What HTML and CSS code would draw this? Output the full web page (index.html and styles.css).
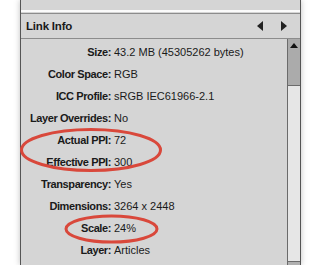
FILE: index.html
```html
<!DOCTYPE html>
<html lang="en-US">
<head>
    <meta charset="utf-8"/>
    <title>Link Info</title>
    <link rel="stylesheet" href="styles.css">
</head>
<body>
    <div class="panel">
        <div class="top-strip"></div>
        <div class="header">
            <span class="title">Link Info</span>
            <span class="nav">
                <svg width="6" height="10" viewBox="0 0 6 10"><polygon points="6,0 6,10 0,5" fill="#222"/></svg>
                <svg width="6" height="10" viewBox="0 0 6 10"><polygon points="0,0 0,10 6,5" fill="#222"/></svg>
            </span>
        </div>
        <div class="content">
            <div class="rows">
                <div class="row"><span class="label">Size:</span><span class="value">43.2 MB (45305262 bytes)</span></div>
                <div class="row"><span class="label">Color Space:</span><span class="value">RGB</span></div>
                <div class="row"><span class="label">ICC Profile:</span><span class="value">sRGB IEC61966-2.1</span></div>
                <div class="row"><span class="label">Layer Overrides:</span><span class="value">No</span></div>
                <div class="row"><span class="label">Actual PPI:</span><span class="value">72</span></div>
                <div class="row"><span class="label">Effective PPI:</span><span class="value">300</span></div>
                <div class="row"><span class="label">Transparency:</span><span class="value">Yes</span></div>
                <div class="row"><span class="label">Dimensions:</span><span class="value">3264 x 2448</span></div>
                <div class="row"><span class="label">Scale:</span><span class="value">24%</span></div>
                <div class="row"><span class="label">Layer:</span><span class="value">Articles</span></div>
            </div>
            <div class="scrollbar">
                <div class="thumb">
                    <svg width="8" height="5" viewBox="0 0 8 5"><polygon points="0,5 8,5 4,0" fill="#111"/></svg>
                </div>
                <div class="track"></div>
                <div class="down"></div>
            </div>
        </div>
    </div>

    <svg class="marks" width="316" height="265" viewBox="0 0 316 265">
        <ellipse cx="91" cy="150" rx="69.5" ry="20.5" fill="none" stroke="#d9483b" stroke-width="3"/>
        <ellipse cx="111.5" cy="229" rx="45.5" ry="13" fill="none" stroke="#d9483b" stroke-width="3"/>
    </svg>
</body>
</html>
```

FILE: styles.css
```css
body {
    margin: 0;
    width: 316px;
    height: 265px;
    overflow: hidden;
    background: #fff;
    font-family: 'Liberation Sans', Arial, sans-serif;
    font-size: 11px;
    color: #1a1a1a;
}

.panel {
    margin-left: 20px;
    width: 279px;
    height: 265px;
    background-color: #d5d5d5;
    border-left: 1px solid #555;
    border-right: 1px solid #555;
    box-shadow: 0 0 6px rgba(0, 0, 0, 0.25);
    display: flex;
    flex-direction: column;
}

.top-strip {
    height: 10px;
    border-bottom: 2px solid #fbfbfb;
    box-shadow: 0 1px 0 #d5d5d5, 0 2px 0 #8c8c8c;
    margin-bottom: 2px;
}

.header {
    height: 24px;
    border-bottom: 1px solid #8c8c8c;
    display: flex;
    align-items: center;
    justify-content: space-between;
    padding: 0 13px 0 5px;
}

.title {
    font-weight: bold;
    font-size: 11.5px;
    letter-spacing: -0.2px;
}

.nav {
    display: flex;
    gap: 18px;
    align-items: center;
}

.nav svg {
    display: block;
}

.content {
    flex: 1;
    display: flex;
    min-height: 0;
}

.rows {
    flex: 1;
    padding-top: 2px;
}

.row {
    height: 22px;
    display: grid;
    grid-template-columns: 90px 1fr;
    column-gap: 3px;
    align-items: center;
    white-space: nowrap;
}

.label {
    font-weight: bold;
    text-align: right;
    letter-spacing: -0.4px;
}

.scrollbar {
    width: 12px;
    border-left: 1px solid #6b6b6b;
    display: flex;
    flex-direction: column;
}

.thumb {
    height: 47px;
    background-color: #ababab;
    border-bottom: 1px solid #6b6b6b;
    display: flex;
    justify-content: center;
    padding-top: 4px;
    box-sizing: border-box;
}

.thumb svg {
    display: block;
}

.track {
    flex: 1;
    background-color: #e6e6e6;
}

.down {
    height: 3px;
    background-color: #b0b0b0;
    border-top: 1px solid #6b6b6b;
}

.marks {
    position: absolute;
    left: 0;
    top: 0;
    pointer-events: none;
}
```
